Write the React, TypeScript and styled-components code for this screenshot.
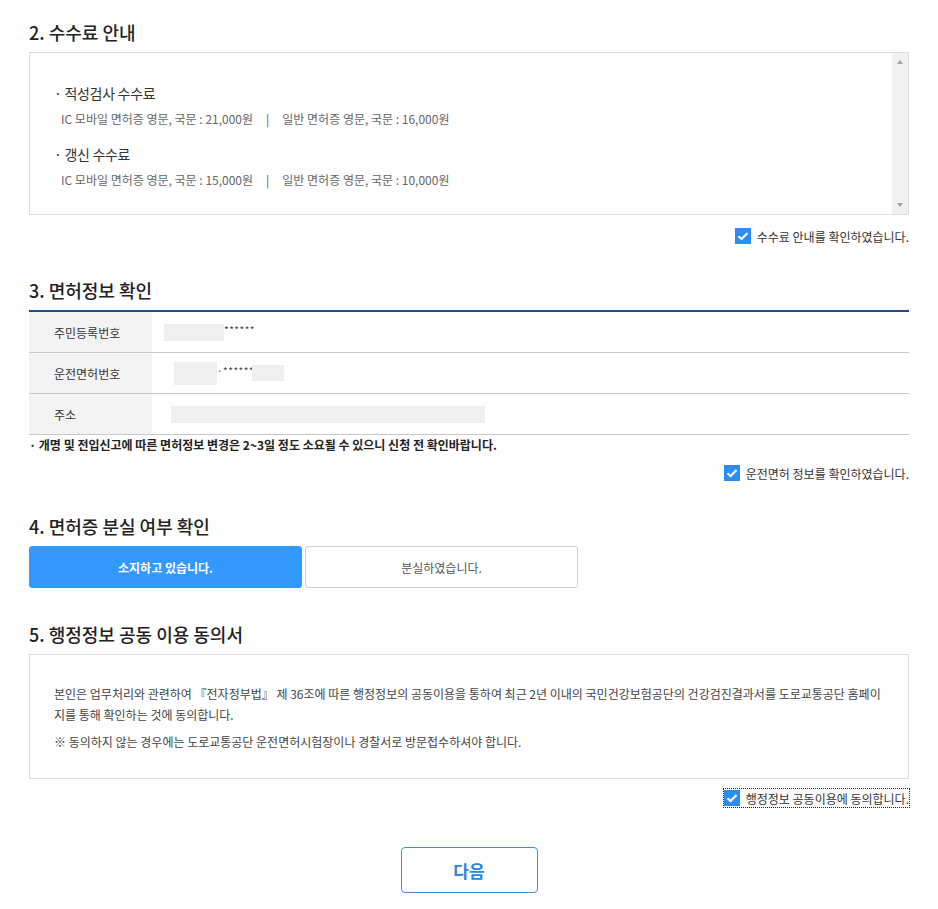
import styled, { createGlobalStyle } from "styled-components";

const GlobalStyle = createGlobalStyle`
  body {
    margin: 0;
    background: #fff;
    font-family: "Noto Sans CJK KR", "Noto Sans", sans-serif;
    color: #333;
  }
`;

function CheckIcon() {
  return (
    <svg width="16" height="16" viewBox="0 0 16 16">
      <path d="M3.5 8.2 L6.6 11 L12.5 5" fill="none" stroke="#fff" strokeWidth="2.2" />
    </svg>
  );
}

function Agree({ label, focused, mt }: { label: string; focused?: boolean; mt: number }) {
  return (
    <CheckRow $mt={mt}>
      <CheckLabel $focused={focused}>
        <CheckBox>
          <CheckIcon />
        </CheckBox>
        {label}
      </CheckLabel>
    </CheckRow>
  );
}

const fees = [
  { title: "적성검사 수수료", mobile: "21,000원", normal: "16,000원" },
  { title: "갱신 수수료", mobile: "15,000원", normal: "10,000원" },
];

export default function App() {
  return (
    <Page>
      <GlobalStyle />

      <Section>
        <Title>2. 수수료 안내</Title>
        <FeeBox>
          <FeeContent>
            {fees.map((fee, i) => (
              <FeeItem key={fee.title} $first={i === 0}>
                <FeeTitle>· {fee.title}</FeeTitle>
                <FeeDetail>
                  IC 모바일 면허증 영문, 국문 : {fee.mobile}
                  <Bar>|</Bar>
                  일반 면허증 영문, 국문 : {fee.normal}
                </FeeDetail>
              </FeeItem>
            ))}
          </FeeContent>
          <ScrollTrack>
            <Arrow $up />
            <Arrow />
          </ScrollTrack>
        </FeeBox>
        <Agree label="수수료 안내를 확인하였습니다." mt={12} />
      </Section>

      <Section $mt={33}>
        <Title>3. 면허정보 확인</Title>
        <InfoTable>
          <InfoRow>
            <InfoHead>주민등록번호</InfoHead>
            <InfoValue>
              <Mask $w={60} $h={17} $ml={12} />
              <Stars>******</Stars>
            </InfoValue>
          </InfoRow>
          <InfoRow>
            <InfoHead>운전면허번호</InfoHead>
            <InfoValue>
              <Mask $w={43} $h={23} $ml={22} />
              <Stars>·******</Stars>
              <Mask $w={32} $h={16} $ml={-2} />
            </InfoValue>
          </InfoRow>
          <InfoRow>
            <InfoHead>주소</InfoHead>
            <InfoValue>
              <Mask $w={314} $h={17} $ml={19} />
            </InfoValue>
          </InfoRow>
        </InfoTable>
        <Notice>· 개명 및 전입신고에 따른 면허정보 변경은 2~3일 정도 소요될 수 있으니 신청 전 확인바랍니다.</Notice>
        <Agree label="운전면허 정보를 확인하였습니다." mt={10} />
      </Section>

      <Section $mt={32}>
        <Title>4. 면허증 분실 여부 확인</Title>
        <ToggleGroup>
          <ToggleButton $active>소지하고 있습니다.</ToggleButton>
          <ToggleButton>분실하였습니다.</ToggleButton>
        </ToggleGroup>
      </Section>

      <Section $mt={34}>
        <Title>5. 행정정보 공동 이용 동의서</Title>
        <ConsentBox>
          <p>
            본인은 업무처리와 관련하여 『전자정부법』 제 36조에 따른 행정정보의 공동이용을 통하여 최근 2년 이내의
            국민건강보험공단의 건강검진결과서를 도로교통공단 홈페이지를 통해 확인하는 것에 동의합니다.
          </p>
          <p>※ 동의하지 않는 경우에는 도로교통공단 운전면허시험장이나 경찰서로 방문접수하셔야 합니다.</p>
        </ConsentBox>
        <Agree label="행정정보 공동이용에 동의합니다." mt={10} focused />
      </Section>

      <NextButton>다음</NextButton>
    </Page>
  );
}

const Page = styled.div`
  padding: 20px 29px 17px;
`;

const Section = styled.section<{ $mt?: number }>`
  margin-top: ${(p) => p.$mt ?? 0}px;
`;

const Title = styled.h2`
  margin: 0 0 8px;
  font-size: 18px;
  line-height: 24px;
  font-weight: 500;
  color: #222;
`;

const FeeBox = styled.div`
  display: flex;
  height: 163px;
  box-sizing: border-box;
  border: 1px solid #dcdcdc;
`;

const FeeContent = styled.div`
  flex: 1;
  padding: 30px 24px 24px;
`;

const FeeItem = styled.div<{ $first?: boolean }>`
  margin-top: ${(p) => (p.$first ? 0 : 15)}px;
`;

const FeeTitle = styled.div`
  font-size: 14px;
  line-height: 20px;
  color: #333;
  letter-spacing: -0.3px;
`;

const FeeDetail = styled.div`
  margin-top: 6px;
  padding-left: 7px;
  font-size: 12px;
  line-height: 20px;
  color: #666;
`;

const Bar = styled.span`
  margin: 0 13px;
  color: #555;
`;

const ScrollTrack = styled.div`
  width: 16px;
  background: #f1f1f1;
  display: flex;
  flex-direction: column;
  justify-content: space-between;
  align-items: center;
  padding: 7px 0;
`;

const Arrow = styled.span<{ $up?: boolean }>`
  width: 0;
  height: 0;
  border-left: 3.5px solid transparent;
  border-right: 3.5px solid transparent;
  ${(p) =>
    p.$up ? "border-bottom: 4px solid #a3a3a3;" : "border-top: 4px solid #a3a3a3;"}
`;

const CheckRow = styled.div<{ $mt: number }>`
  display: flex;
  justify-content: flex-end;
  margin-top: ${(p) => p.$mt}px;
`;

const CheckLabel = styled.label<{ $focused?: boolean }>`
  display: inline-flex;
  align-items: center;
  gap: 6px;
  height: 18px;
  font-size: 12px;
  color: #333;
  outline: ${(p) => (p.$focused ? "1px dotted #222" : "none")};
`;

const CheckBox = styled.span`
  display: flex;
  width: 16px;
  height: 16px;
  background: #2b8cf3;
`;

const InfoTable = styled.div`
  border-top: 2px solid #1f4f8a;
`;

const InfoRow = styled.div`
  display: grid;
  grid-template-columns: 123px 1fr;
  height: 41px;
  box-sizing: border-box;
  border-bottom: 1px solid #c8c8c8;
`;

const InfoHead = styled.div`
  display: flex;
  align-items: center;
  padding-left: 25px;
  background: #f3f3f3;
  font-size: 12px;
  color: #333;
`;

const InfoValue = styled.div`
  display: flex;
  align-items: center;
`;

const Mask = styled.span<{ $w: number; $h: number; $ml: number }>`
  width: ${(p) => p.$w}px;
  height: ${(p) => p.$h}px;
  margin-left: ${(p) => p.$ml}px;
  background: #efefef;
`;

const Stars = styled.span`
  margin-bottom: 4px;
  font-size: 10px;
  line-height: 12px;
  color: #444;
  letter-spacing: 0.5px;
`;

const Notice = styled.p`
  margin: 1px 0 0;
  font-size: 12px;
  line-height: 18px;
  font-weight: 700;
  color: #222;
`;

const ToggleGroup = styled.div`
  display: flex;
  gap: 3px;
  margin-top: 1px;
`;

const ToggleButton = styled.button<{ $active?: boolean }>`
  width: 273px;
  height: 42px;
  border-radius: 3px;
  border: 1px solid ${(p) => (p.$active ? "#3399ff" : "#cfcfcf")};
  background: ${(p) => (p.$active ? "#3399ff" : "#fff")};
  color: ${(p) => (p.$active ? "#fff" : "#555")};
  font-family: inherit;
  font-size: 12px;
  font-weight: ${(p) => (p.$active ? 700 : 400)};
`;

const ConsentBox = styled.div`
  border: 1px solid #dcdcdc;
  padding: 28px 20px 26px 24px;
  font-size: 12px;
  line-height: 21px;
  color: #444;
  word-break: break-all;

  p {
    margin: 0;
  }
  p + p {
    margin-top: 6px;
  }
`;

const NextButton = styled.button`
  display: block;
  margin: 40px auto 0;
  width: 137px;
  height: 46px;
  border: 1px solid #3d8fe6;
  border-radius: 4px;
  background: #fff;
  color: #2f86e0;
  font-family: inherit;
  font-size: 17px;
  font-weight: 700;
`;
